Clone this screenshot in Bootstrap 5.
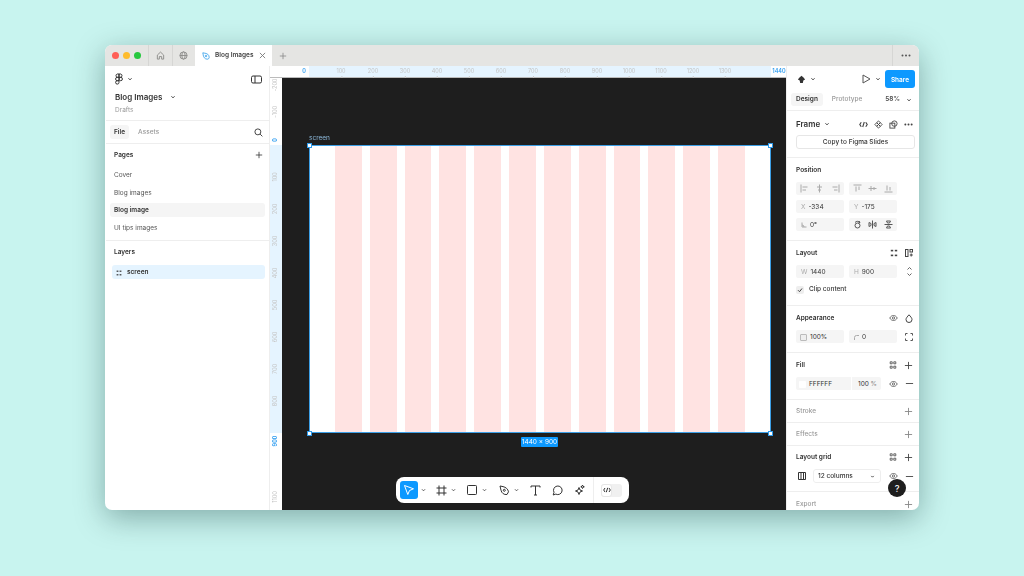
<!DOCTYPE html>
<html lang="en">
<head>
    <meta charset="UTF-8">
    <title>Blog Images - Figma</title>
    <link href="https://cdn.jsdelivr.net/npm/bootstrap@5.3.2/dist/css/bootstrap.min.css" rel="stylesheet">
    <style>
        body {
            background-color: #c8f4ef;
            font-family: Inter, "Liberation Sans", sans-serif;
            font-size: 6.5px;
            line-height: 1;
            color: #333;
            width: 1024px;
            height: 576px;
            overflow: hidden;
        }
        svg { display: block; flex: none; fill: none; stroke: currentColor; stroke-width: 1; }

        .app-window {
            margin: 45px 0 0 105px;
            width: 814px;
            height: 465px;
            border-radius: 7px;
            overflow: hidden;
            background: #fff;
            box-shadow: 0 8px 30px rgba(0,40,40,.35);
            filter: blur(.35px);
        }
        .tabbar { height: 21px; background: #e5e5e3; }
        .traffic { width: 43px; padding-left: 7px; gap: 4px; }
        .traffic i { width: 7px; height: 7px; border-radius: 50%; }
        .mini-tab { width: 23.5px; height: 21px; border-left: 1px solid #d6d6d4; color: #8a8a88; }
        .file-tab { width: 77px; height: 21px; background: #fff; padding: 0 7px; gap: 5px; font-weight: 600; font-size: 6.5px; color: #444; white-space: nowrap; }
        .tab-add { margin-left: 7px; color: #888; }
        .tab-more { width: 27px; height: 21px; border-left: 1px solid #d6d6d4; color: #555; }

        .left-panel { width: 165px; padding-left: 1px; border-right: 1px solid #eee; }
        .doc-head { height: 55px; padding: 7px 7px 0 9px; border-bottom: 1px solid #eee; }
        .doc-title { font-size: 8px; font-weight: 600; color: #333; }
        .doc-sub { color: #999; margin-top: 6px; }
        .file-tabs { height: 23px; padding: 0 6px 0 4px; border-bottom: 1px solid #eee; }
        .pill { padding: 3.5px 5px; border-radius: 3px; background: #f5f5f5; font-weight: 600; }
        .pill-file { padding: 3.5px 4px; }
        .pill-off { padding: 3.5px 5px; color: #999; font-weight: 500; }
        .pages-box { height: 97px; border-bottom: 1px solid #eee; }
        .side-title { height: 22px; padding: 0 6px 0 8px; font-weight: 600; font-size: 6.5px; }
        .page-row { height: 14px; margin: 3.6px 4px 0 4px; padding: 1px 4px 0; border-radius: 3px; color: #555; }
        .side-title + .page-row { margin-top: 2px; }
        .page-row.on { background: #f5f5f5; font-weight: 600; color: #333; }
        .layer-row { height: 14px; margin: 2px 4px 0 6px; padding: 1px 4px 0; gap: 5px; border-radius: 3px; background: #e5f4ff; font-weight: 600; }

        .stage { width: 516px; }
        .ruler-top { height: 12px; background: #fff; border-bottom: 1px solid #bbb; position: relative; }
        .ruler-side { width: 12px; background: #fff; position: relative; overflow: hidden; }
        .ruler-hl-x { position: absolute; left: 39px; width: 462px; top: 0; bottom: 0; background: #e5f4ff; }
        .ruler-hl-y { position: absolute; left: 0; right: 0; top: 67px; height: 288px; background: #e5f4ff; }
        .tick { position: absolute; font-size: 5.5px; color: #c4c4c4; white-space: nowrap; }
        .tick.hot { color: #2d9cf0; font-weight: 600; }
        .tick-y { transform: translate(-50%,-50%) rotate(-90deg); left: 6px; }
        .tick-x { transform: translateX(-50%); top: 3px; }
        .tick-x::after { content: ""; position: absolute; left: 50%; top: 6.5px; width: 1px; height: 2px; background: #ccc; }
        .tick-x.hot::after { display: none; }

        .canvas-area { background: #1e1e1e; position: relative; overflow: hidden; }
        .art-frame { position: absolute; left: 27px; top: 67px; width: 462px; height: 288px; background: #fff; border: 1px solid #3c9fe6; padding: 0 25px; gap: 8px; }
        .art-frame i { flex: 1; background: #ffe3e2; }
        .handle { position: absolute; width: 5px; height: 5px; background: #fff; border: 1px solid #2f9bea; }
        .frame-name { position: absolute; left: 27px; top: 57px; color: #8cb8da; }
        .size-tag { position: absolute; left: 239px; top: 359px; width: 37px; height: 10px; background: #0d99ff; color: #fff; border-radius: 1px; }
        .toolbar { position: absolute; left: 114px; top: 399px; width: 233px; height: 26px; background: #fff; border-radius: 8px; padding-left: 4px; color: #333; }
        .tool-on { width: 18px; height: 18px; background: #0d99ff; border-radius: 3px; color: #fff; }
        .tool { width: 14px; height: 14px; }
        .caret { width: 9px; margin: 0 4px 0 1px; color: #555; }
        .tool-sep { width: 1px; height: 26px; background: #eee; margin: 0 7px; }
        .code-toggle { width: 21px; height: 13px; background: #f0f0f0; border-radius: 3px; }
        .code-toggle b { width: 11px; height: 13px; background: #fff; border-radius: 3px; border: 1px solid #e6e6e6; }

        .right-panel { width: 133px; border-left: 1px solid #eee; position: relative; }
        .top-box { height: 45px; padding: 4px 4px 0 6px; border-bottom: 1px solid #eee; }
        .share-btn { width: 30px; height: 18px; padding: 4px 0 0; font-size: 6.5px; font-weight: 600; background: #0d99ff; color: #fff; border: 0; border-radius: 3px; }
        .sec { padding: 5px 4px 0 9px; border-bottom: 1px solid #eee; }
        .sec-frame { padding-top: 6px; height: 47px; }
        .sec-head { height: 14px; margin-bottom: 5px; font-weight: 600; }
        .sec-head.dim { color: #999; font-weight: 500; margin: 0; }
        .fld-row { height: 13px; margin-bottom: 5px; gap: 5px; }
        .fld { width: 48px; height: 13px; background: #f5f5f5; border-radius: 2px; padding: 1.5px 5px 0; gap: 3px; }
        .fld em { font-style: normal; color: #aaa; }
        .seg { color: #aaa; justify-content: space-around; padding: 0 1px; }
        .seg-dark { color: #555; }
        .head-icons { gap: 5px; color: #444; }
        .slides-btn { width: 119px; height: 14px; padding: 1px 0 0; font-size: 6.5px; font-weight: 500; color: #333; background: #fff; border: 1px solid #e6e6e6; border-radius: 3px; }
        .sw { width: 7px; height: 7px; background: #fff; border: 1px solid #bbb; border-radius: 1px; }
        .sw-fill { border: 0; margin: 0 3px; }
        .check-box { width: 8px; height: 8px; background: #eee; border-radius: 2px; color: #444; }
        .fill-fld { width: 85px; height: 13px; background: #f5f5f5; border-radius: 2px; padding-top: 1.5px; }
        .fill-opacity { width: 30px; height: 13px; margin-left: auto; margin-top: -1.5px; padding: 1.5px 4px 0 6px; border-left: 1px solid #fff; }
        .grid-select { width: 68px; height: 14px; border: 1px solid #eee; border-radius: 3px; padding: 0 5px 0 4px; }
        .help-btn { position: absolute; left: 101px; top: 413px; width: 18px; height: 18px; border-radius: 50%; background: #1e1e1e; color: #fff; font-size: 9px; font-weight: 500; }
    </style>
</head>
<body>

<svg width="0" height="0" style="position:absolute">
    <symbol id="i-plus" viewBox="0 0 10 10"><path d="M5 1v8M1 5h8"/></symbol>
    <symbol id="i-minus" viewBox="0 0 10 10"><path d="M1 5h8"/></symbol>
    <symbol id="i-caret" viewBox="0 0 6 6"><path d="M1.500 2.300 3 3.800l1.500-1.500"/></symbol>
    <symbol id="i-eye" viewBox="0 0 12 10"><path d="M1 5c1.300-2.300 3-3.300 5-3.300s3.700 1 5 3.300c-1.300 2.300-3 3.300-5 3.300S2.300 7.300 1 5z"/><circle cx="6" cy="5" r="1.500"/></symbol>
    <symbol id="i-dots4" viewBox="0 0 10 10"><g fill="currentColor" stroke="none"><rect x="1" y="1" width="3" height="2"/><rect x="6" y="1" width="3" height="2"/><rect x="1" y="7" width="3" height="2"/><rect x="6" y="7" width="3" height="2"/></g></symbol>
    <symbol id="i-style" viewBox="0 0 10 10"><path d="M1.500 1h2.500v2.500H1.500zM6 1h2.500v2.500H6zM1.500 6.500H4V9H1.500zM6 6.500h2.500V9H6z"/></symbol>
</svg>

<div class="app-window d-flex flex-column">

    <!-- Barra de pestañas -->
    <div class="tabbar d-flex align-items-center">
        <div class="traffic d-flex align-items-center">
            <i style="background:#ff5f57"></i><i style="background:#febc2e"></i><i style="background:#28c840"></i>
        </div>
        <div class="mini-tab d-flex align-items-center justify-content-center">
            <svg width="9" height="9" viewBox="0 0 10 10"><path d="M1.500 9V4.500L5 1.200l3.500 3.300V9H6.300V6.200H3.700V9z"/></svg>
        </div>
        <div class="mini-tab d-flex align-items-center justify-content-center">
            <svg width="9" height="9" viewBox="0 0 10 10"><circle cx="5" cy="5" r="4"/><ellipse cx="5" cy="5" rx="1.800" ry="4"/><path d="M1 5h8"/></svg>
        </div>
        <div class="file-tab d-flex align-items-center">
            <svg width="8" height="8" viewBox="0 0 10 10" style="color:#2b9be8"><path d="M1 1l2.500.5C6 1.500 9 3.500 9 6.500 9 8 8 9 6.500 9 3.500 9 1.500 6 1.500 3.500z"/><circle cx="5" cy="5" r="1"/></svg>
            <span class="flex-grow-1">Blog Images</span>
            <svg width="7" height="7" viewBox="0 0 8 8" style="color:#777"><path d="M1 1l6 6M7 1 1 7"/></svg>
        </div>
        <div class="tab-add"><svg width="8" height="8"><use href="#i-plus"/></svg></div>
        <div class="ms-auto tab-more d-flex align-items-center justify-content-center">
            <svg width="10" height="3" viewBox="0 0 10 3"><g fill="currentColor" stroke="none"><circle cx="1.500" cy="1.500" r="1"/><circle cx="5" cy="1.500" r="1"/><circle cx="8.500" cy="1.500" r="1"/></g></svg>
        </div>
    </div>

    <div class="d-flex flex-grow-1" style="min-height:0">

        <!-- Panel izquierdo -->
        <div class="left-panel d-flex flex-column flex-none">
            <div class="doc-head">
                <div class="d-flex align-items-center justify-content-between" style="height:12px">
                    <div class="d-flex align-items-center gap-1">
                        <svg width="8" height="12" viewBox="0 0 8 12"><path d="M4 1H2.300a1.700 1.700 0 0 0 0 3.300H4zM4 4.300H2.300a1.700 1.700 0 0 0 0 3.400H4zM4 7.700H2.300A1.700 1.700 0 1 0 4 9.400zM4 1h1.700a1.700 1.700 0 0 1 0 3.300H4z"/><circle cx="5.700" cy="6" r="1.700"/></svg>
                        <svg width="6" height="6"><use href="#i-caret"/></svg>
                    </div>
                    <svg width="11" height="9" viewBox="0 0 11 9"><rect x=".5" y="1" width="10" height="7" rx="1.500"/><path d="M4 1v7"/></svg>
                </div>
                <div class="d-flex align-items-center gap-2" style="margin-top:8px">
                    <span class="doc-title">Blog Images</span>
                    <svg width="6" height="6"><use href="#i-caret"/></svg>
                </div>
                <div class="doc-sub">Drafts</div>
            </div>
            <div class="file-tabs d-flex align-items-center">
                <span class="pill pill-file">File</span>
                <span class="pill-off ms-1">Assets</span>
                <svg class="ms-auto" width="9" height="9" viewBox="0 0 10 10"><circle cx="4.300" cy="4.300" r="3.300"/><path d="M6.800 6.800 9.300 9.300"/></svg>
            </div>
            <div class="pages-box">
                <div class="side-title d-flex align-items-center justify-content-between">
                    <span>Pages</span>
                    <svg width="8" height="8"><use href="#i-plus"/></svg>
                </div>
                <div class="page-row d-flex align-items-center">Cover</div>
                <div class="page-row d-flex align-items-center">Blog images</div>
                <div class="page-row on d-flex align-items-center">Blog image</div>
                <div class="page-row d-flex align-items-center">UI tips images</div>
            </div>
            <div class="side-title d-flex align-items-center">Layers</div>
            <div class="layer-row d-flex align-items-center">
                <svg width="6" height="6"><use href="#i-dots4"/></svg>
                <span>screen</span>
            </div>
        </div>

        <!-- Lienzo con reglas -->
        <div class="stage d-flex flex-column flex-none">
            <div class="ruler-top flex-none" id="ruler-x"><div class="ruler-hl-x"></div></div>
            <div class="d-flex flex-grow-1" style="min-height:0">
                <div class="ruler-side flex-none" id="ruler-y"><div class="ruler-hl-y"></div></div>
                <div class="canvas-area flex-grow-1">
                    <div class="frame-name">screen</div>
                    <div class="art-frame d-flex" id="art-frame"></div>
                    <span class="handle" style="left:25px;top:65px"></span>
                    <span class="handle" style="left:486px;top:65px"></span>
                    <span class="handle" style="left:25px;top:353px"></span>
                    <span class="handle" style="left:486px;top:353px"></span>
                    <div class="size-tag d-flex align-items-center justify-content-center">1440 × 900</div>

                    <div class="toolbar d-flex align-items-center">
                        <div class="tool-on d-flex align-items-center justify-content-center">
                            <svg width="12" height="12" viewBox="0 0 12 12"><path d="M1.500 1.500 10.500 4.800 6.500 6.500 4.800 10.500z"/></svg>
                        </div>
                        <svg class="caret" width="9" height="6" viewBox="0 0 6 6"><use href="#i-caret"/></svg>
                        <div class="tool d-flex align-items-center justify-content-center" style="margin-left:2px">
                            <svg width="11" height="11" viewBox="0 0 11 11"><path d="M3 .5v10M8 .5v10M.5 3h10M.5 8h10"/></svg>
                        </div>
                        <svg class="caret" width="9" height="6" viewBox="0 0 6 6"><use href="#i-caret"/></svg>
                        <div class="tool d-flex align-items-center justify-content-center" style="margin-left:3px">
                            <svg width="10" height="10" viewBox="0 0 10 10"><rect x=".5" y=".5" width="9" height="9" rx=".8"/></svg>
                        </div>
                        <svg class="caret" width="9" height="6" viewBox="0 0 6 6"><use href="#i-caret"/></svg>
                        <div class="tool d-flex align-items-center justify-content-center ms-1">
                            <svg width="11" height="11" viewBox="0 0 11 11"><path d="M1 1l3 .6c2.800.6 5 2.400 5.500 5.200L8 9.500C5 10 2.500 8 2 5.200z"/><circle cx="5.300" cy="5.300" r="1"/></svg>
                        </div>
                        <svg class="caret" width="9" height="6" viewBox="0 0 6 6"><use href="#i-caret"/></svg>
                        <div class="tool d-flex align-items-center justify-content-center" style="margin-left:3px">
                            <svg width="11" height="11" viewBox="0 0 11 11"><path d="M1 2.500V1h9v1.500M5.500 1v9M4 10h3"/></svg>
                        </div>
                        <div class="tool d-flex align-items-center justify-content-center" style="margin-left:8px">
                            <svg width="11" height="11" viewBox="0 0 11 11"><path d="M1.200 10 2 7.300A4.300 4.300 0 1 1 3.800 9.100z"/></svg>
                        </div>
                        <div class="tool d-flex align-items-center justify-content-center" style="margin-left:8px">
                            <svg width="12" height="12" viewBox="0 0 12 12"><path d="M6 3.500 7 6l2.500 1L7 8 6 10.500 5 8 2.500 7 5 6zM9.500 1l.5 1.300 1.300.5-1.300.5-.5 1.200-.5-1.200-1.200-.5L9 2.300z"/></svg>
                        </div>
                        <div class="tool-sep"></div>
                        <div class="code-toggle d-flex">
                            <b class="d-flex align-items-center justify-content-center">
                                <svg width="8" height="6" viewBox="0 0 8 6"><path d="M2 1 .7 3 2 5M6 1l1.300 2L6 5M4.700.8 3.300 5.200"/></svg>
                            </b>
                        </div>
                    </div>
                </div>
            </div>
        </div>

        <!-- Panel derecho -->
        <div class="right-panel flex-none">
            <div class="top-box">
                <div class="d-flex align-items-center" style="height:18px">
                    <svg class="ms-1" width="9" height="9" viewBox="0 0 10 10"><path fill="#333" stroke="none" d="M5 .8 7.500 3 9 5 7 6l-.5 3h-3L3 6 1 5l1.500-2z"/></svg>
                    <svg class="ms-1" width="6" height="6"><use href="#i-caret"/></svg>
                    <svg style="margin-left:46px;color:#555" width="9" height="10" viewBox="0 0 9 10"><path d="M1 1v8l7-4z"/></svg>
                    <svg class="ms-1" width="6" height="6"><use href="#i-caret"/></svg>
                    <button class="btn share-btn d-flex align-items-center justify-content-center" style="margin-left:4px">Share</button>
                </div>
                <div class="d-flex align-items-center" style="margin-top:5px;height:13px">
                    <span class="pill" style="margin-left:-2px">Design</span>
                    <span class="pill-off ms-1">Prototype</span>
                    <span class="ms-auto fw-semibold" style="color:#555">58%</span>
                    <svg style="margin-left:6px;margin-right:3px" width="6" height="6"><use href="#i-caret"/></svg>
                </div>
            </div>

            <div class="sec sec-frame">
                <div class="sec-head d-flex align-items-center" style="margin-bottom:4px">
                    <span style="font-size:8px;font-weight:600">Frame</span>
                    <svg class="ms-1" width="6" height="6"><use href="#i-caret"/></svg>
                    <div class="ms-auto d-flex align-items-center" style="gap:6px;color:#444;margin-right:2px">
                        <svg width="9" height="7" viewBox="0 0 8 6"><path d="M2 1 .7 3 2 5M6 1l1.300 2L6 5M4.700.8 3.300 5.200"/></svg>
                        <svg width="9" height="9" viewBox="0 0 10 10"><path d="M5 1 7 3 5 5 3 3zM5 5l2 2-2 2-2-2zM1 5l2-2 2 2-2 2zM5 5l2-2 2 2-2 2z"/></svg>
                        <svg width="9" height="9" viewBox="0 0 10 10"><rect x="1" y="3.500" width="5.500" height="5.500"/><circle cx="6" cy="4" r="3"/></svg>
                        <svg width="9" height="3" viewBox="0 0 10 3"><g fill="currentColor" stroke="none"><circle cx="1.500" cy="1.500" r="1.100"/><circle cx="5" cy="1.500" r="1.100"/><circle cx="8.500" cy="1.500" r="1.100"/></g></svg>
                    </div>
                </div>
                <button class="btn slides-btn d-flex align-items-center justify-content-center">Copy to Figma Slides</button>
            </div>

            <div class="sec" style="height:83px">
                <div class="sec-head d-flex align-items-center">Position</div>
                <div class="fld-row d-flex">
                    <div class="fld seg d-flex align-items-center" style="gap:0">
                        <svg width="9" height="9" viewBox="0 0 9 9"><path d="M1 .5v8M2.500 3h5M2.500 6H6"/></svg>
                        <svg width="9" height="9" viewBox="0 0 9 9"><path d="M4.500.5v8M2 3h5M3 6h3"/></svg>
                        <svg width="9" height="9" viewBox="0 0 9 9"><path d="M8 .5v8M1.500 3h5M3 6h3.500"/></svg>
                    </div>
                    <div class="fld seg d-flex align-items-center" style="gap:0">
                        <svg width="9" height="9" viewBox="0 0 9 9"><path d="M.5 1h8M3 2.500v5M6 2.500V6"/></svg>
                        <svg width="9" height="9" viewBox="0 0 9 9"><path d="M.5 4.500h8M3 2v5M6 3v3"/></svg>
                        <svg width="9" height="9" viewBox="0 0 9 9"><path d="M.5 8h8M3 1.500v5M6 3v3.500"/></svg>
                    </div>
                </div>
                <div class="fld-row d-flex">
                    <div class="fld d-flex align-items-center"><em>X</em><span>-334</span></div>
                    <div class="fld d-flex align-items-center"><em>Y</em><span>-175</span></div>
                </div>
                <div class="fld-row d-flex">
                    <div class="fld d-flex align-items-center">
                        <svg width="6" height="6" viewBox="0 0 6 6" style="color:#aaa"><path d="M1 .5v4.500h4.500M1 3a2 2 0 0 1 2 2"/></svg>
                        <span>0°</span>
                    </div>
                    <div class="fld seg seg-dark d-flex align-items-center" style="gap:0">
                        <svg width="9" height="9" viewBox="0 0 9 9"><circle cx="4.500" cy="5.500" r="2.500"/><path d="M2 2.500a3.300 3.300 0 0 1 5 0M6 1l1 1.500-1.600.4"/></svg>
                        <svg width="9" height="9" viewBox="0 0 9 9"><path d="M4.500 .5v8M1 2.500v4l2-1v-2zM8 2.500v4l-2-1v-2z"/></svg>
                        <svg width="9" height="9" viewBox="0 0 9 9"><path d="M.5 4.500h8M2.500 1h4l-1 2h-2zM2.500 8h4l-1-2h-2z"/></svg>
                    </div>
                </div>
            </div>

            <div class="sec" style="height:65px">
                <div class="sec-head d-flex align-items-center justify-content-between">
                    <span>Layout</span>
                    <div class="head-icons d-flex align-items-center" style="gap:7px;margin-right:2px">
                        <svg width="8" height="8"><use href="#i-dots4"/></svg>
                        <svg width="8" height="8" viewBox="0 0 8 8"><rect x=".5" y=".5" width="2.500" height="7"/><rect x="5" y=".5" width="2.500" height="2.500"/><path d="M6.200 4.500v3M4.800 6h3"/></svg>
                    </div>
                </div>
                <div class="fld-row d-flex align-items-center">
                    <div class="fld d-flex align-items-center"><em>W</em><span>1440</span></div>
                    <div class="fld d-flex align-items-center"><em>H</em><span>900</span></div>
                    <svg class="ms-1" width="7" height="11" viewBox="0 0 7 11" style="color:#666"><path d="M1.500 3.500 3.500 1.500l2 2M1.500 7.500l2 2 2-2"/></svg>
                </div>
                <div class="d-flex align-items-center" style="gap:5px;height:13px">
                    <div class="check-box d-flex align-items-center justify-content-center">
                        <svg width="6" height="6" viewBox="0 0 6 6"><path d="M1 3.200 2.500 4.700 5 1.500"/></svg>
                    </div>
                    <span class="fw-medium">Clip content</span>
                </div>
            </div>

            <div class="sec" style="height:47px">
                <div class="sec-head d-flex align-items-center justify-content-between">
                    <span>Appearance</span>
                    <div class="head-icons d-flex align-items-center" style="gap:7px;margin-right:2px">
                        <svg width="9" height="8"><use href="#i-eye"/></svg>
                        <svg width="8" height="9" viewBox="0 0 8 9"><path d="M4 .8C5.500 2.500 7 4 7 5.500a3 3 0 0 1-6 0C1 4 2.500 2.500 4 .8z"/></svg>
                    </div>
                </div>
                <div class="fld-row d-flex align-items-center">
                    <div class="fld d-flex align-items-center" style="padding-left:4px"><i class="sw" style="background:#eee"></i><span>100%</span></div>
                    <div class="fld d-flex align-items-center"><svg width="5" height="5" viewBox="0 0 5 5" style="color:#aaa"><path d="M.5 5V2.500a2 2 0 0 1 2-2H5"/></svg><span>0</span></div>
                    <svg class="ms-auto" style="margin-right:2px;color:#555" width="8" height="8" viewBox="0 0 8 8"><path d="M.5 2.500v-2h2M5.500.5h2v2M7.500 5.500v2h-2M2.500 7.500h-2v-2"/></svg>
                </div>
            </div>

            <div class="sec" style="height:47px">
                <div class="sec-head d-flex align-items-center justify-content-between">
                    <span>Fill</span>
                    <div class="head-icons d-flex align-items-center" style="gap:7px;margin-right:2px">
                        <svg width="8" height="8"><use href="#i-style"/></svg>
                        <svg width="9" height="9"><use href="#i-plus"/></svg>
                    </div>
                </div>
                <div class="fld-row d-flex align-items-center">
                    <div class="fill-fld d-flex align-items-center">
                        <i class="sw sw-fill"></i>
                        <span>FFFFFF</span>
                        <div class="fill-opacity d-flex align-items-center">
                            <span>100</span><span class="ms-auto" style="color:#888">%</span>
                        </div>
                    </div>
                    <div class="head-icons d-flex align-items-center" style="gap:7px;margin-left:3px">
                        <svg width="9" height="8"><use href="#i-eye"/></svg>
                        <svg width="9" height="9"><use href="#i-minus"/></svg>
                    </div>
                </div>
            </div>

            <div class="sec" style="height:23px">
                <div class="sec-head dim d-flex align-items-center justify-content-between" style="margin-top:-1px">
                    <span>Stroke</span>
                    <svg style="margin-right:2px;color:#888" width="9" height="9"><use href="#i-plus"/></svg>
                </div>
            </div>
            <div class="sec" style="height:23px">
                <div class="sec-head dim d-flex align-items-center justify-content-between" style="margin-top:-1px">
                    <span>Effects</span>
                    <svg style="margin-right:2px;color:#888" width="9" height="9"><use href="#i-plus"/></svg>
                </div>
            </div>

            <div class="sec" style="height:46px">
                <div class="sec-head d-flex align-items-center justify-content-between" style="margin-top:-1px;margin-bottom:6px">
                    <span>Layout grid</span>
                    <div class="head-icons d-flex align-items-center" style="gap:7px;margin-right:2px">
                        <svg width="8" height="8"><use href="#i-style"/></svg>
                        <svg width="9" height="9"><use href="#i-plus"/></svg>
                    </div>
                </div>
                <div class="d-flex align-items-center" style="margin-top:-1px">
                    <svg style="margin-left:2px;margin-right:7px" width="8" height="8" viewBox="0 0 8 8"><path d="M.5.5h7v7h-7zM3 .5v7M5.500.5v7"/></svg>
                    <div class="grid-select d-flex align-items-center justify-content-between">
                        <span class="fw-medium">12 columns</span>
                        <svg width="5" height="5"><use href="#i-caret"/></svg>
                    </div>
                    <div class="head-icons d-flex align-items-center" style="gap:7px;margin-left:8px">
                        <svg width="9" height="8"><use href="#i-eye"/></svg>
                        <svg width="9" height="9"><use href="#i-minus"/></svg>
                    </div>
                </div>
            </div>

            <div class="sec border-0">
                <div class="sec-head dim d-flex align-items-center justify-content-between">
                    <span>Export</span>
                    <svg style="margin-right:2px;color:#888" width="9" height="9"><use href="#i-plus"/></svg>
                </div>
            </div>

            <div class="help-btn d-flex align-items-center justify-content-center">?</div>
        </div>
    </div>
</div>

<script>
    // Columnas del layout grid
    const frame = document.getElementById("art-frame");
    for (let c = 0; c < 12; c++) frame.appendChild(document.createElement("i"));

    // Reglas: [texto, posición, resaltado]
    const rulerX = document.getElementById("ruler-x");
    [["0", 34, 1], [100, 71], [200, 103], [300, 135], [400, 167], [500, 199], [600, 231], [700, 263],
     [800, 295], [900, 327], [1000, 359], [1100, 391], [1200, 423], [1300, 455], [1440, 509, 1]].forEach(t => {
        const el = document.createElement("span");
        el.className = "tick tick-x" + (t[2] ? " hot" : "");
        el.style.left = t[1] + "px";
        el.textContent = t[0];
        rulerX.appendChild(el);
    });

    const rulerY = document.getElementById("ruler-y");
    [[-200, 7], [-100, 34], ["0", 62, 1], [100, 99], [200, 131], [300, 163], [400, 195], [500, 227],
     [600, 259], [700, 291], [800, 323], [900, 363, 1], [1100, 419]].forEach(t => {
        const el = document.createElement("span");
        el.className = "tick tick-y" + (t[2] ? " hot" : "");
        el.style.top = t[1] + "px";
        el.textContent = t[0];
        rulerY.appendChild(el);
    });
</script>

<script src="https://cdn.jsdelivr.net/npm/bootstrap@5.3.2/dist/js/bootstrap.bundle.min.js"></script>
</body>
</html>
